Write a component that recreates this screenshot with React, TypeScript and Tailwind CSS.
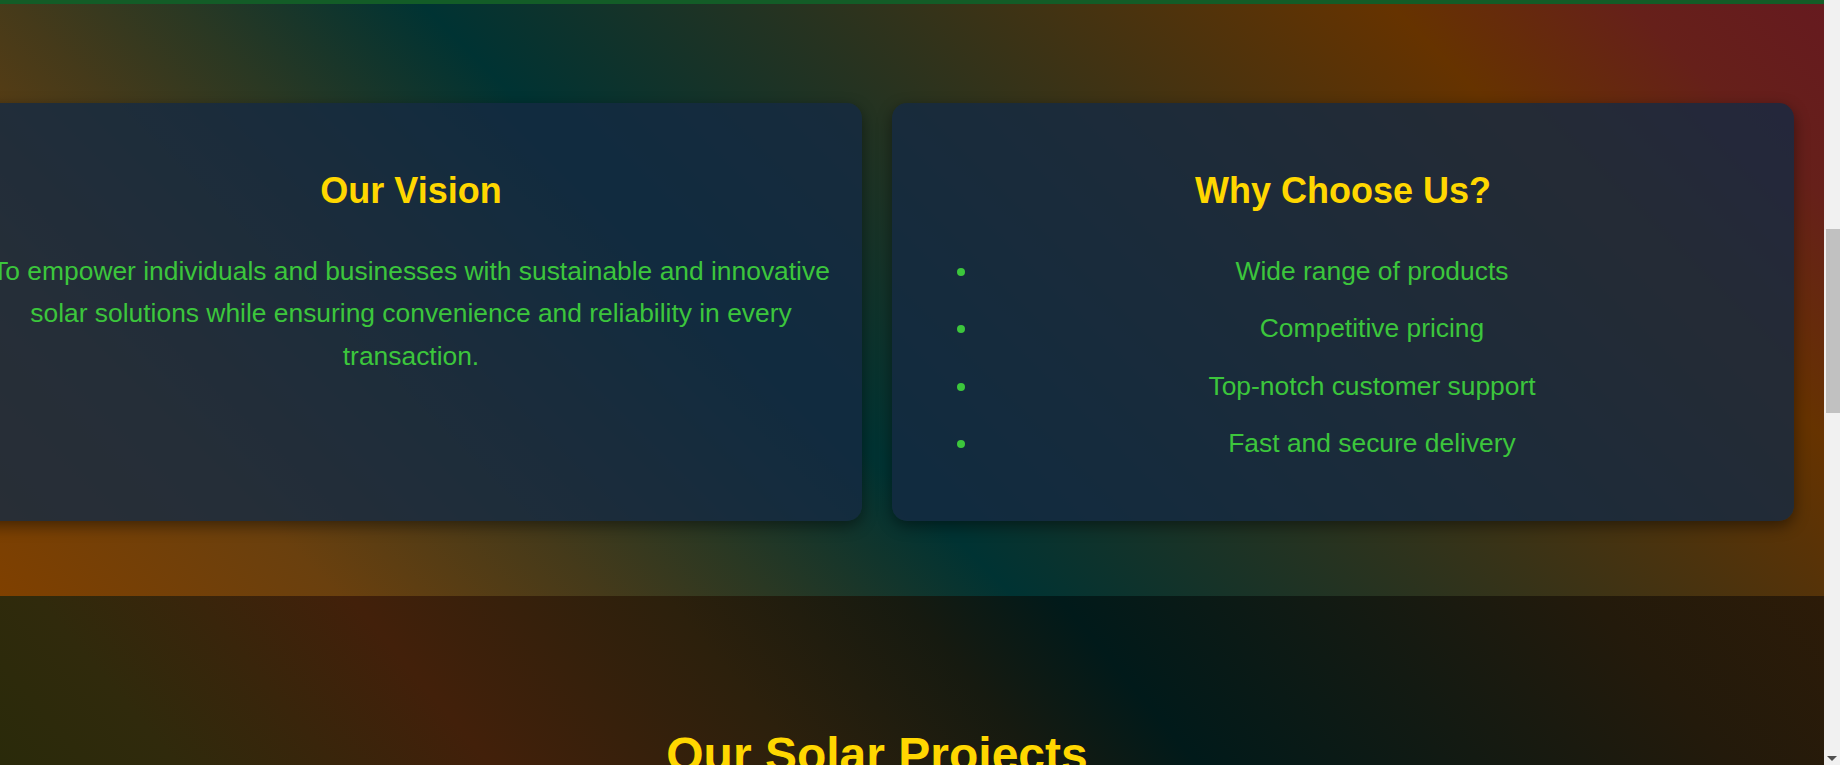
const reasons = [
  "Wide range of products",
  "Competitive pricing",
  "Top-notch customer support",
  "Fast and secure delivery",
];

const Card = ({ children }: { children: React.ReactNode }) => (
  <div className="rounded-[15px] bg-[rgba(21,42,67,0.81)] shadow-[0_5px_15px_rgba(0,0,0,0.45)] px-[30px] pt-[67px] text-center">
    {children}
  </div>
);

export default function App() {
  return (
    <div className="flex h-[765px] w-full overflow-hidden font-['Liberation_Sans',Arial,sans-serif]">
      <div className="flex-1 flex flex-col overflow-hidden">
        <div className="h-[4px] bg-[#135c27] shrink-0" />

        {/* about section */}
        <section className="h-[592px] shrink-0 overflow-hidden bg-[linear-gradient(45deg,#7f4000_0%,#6a400e_14%,#453a1a_25%,#2a3823_32%,#003333_42%,#33331a_62%,#663300_82%,#66201a_92%,#661a1f_100%)]">
          <div className="w-[1894px] ml-[-70px] grid grid-cols-2 gap-[30px] px-[30px] pt-[99px]">
            <div className="h-[418px] grid">
              <Card>
                <h2 className="text-[36px] leading-[41px] font-bold text-[#ffd700] mb-[39px]">Our Vision</h2>
                <p className="text-[26.4px] leading-[42.4px] text-[#3cc63c]">
                  To empower individuals and businesses with sustainable and innovative solar solutions while
                  ensuring convenience and reliability in every transaction.
                </p>
              </Card>
            </div>
            <div className="h-[418px] grid">
              <Card>
                <h2 className="text-[36px] leading-[41px] font-bold text-[#ffd700] mb-[39px]">Why Choose Us?</h2>
                <ul className="list-disc pl-[58px] text-[26.4px] leading-[42.4px] text-[#3cc63c]">
                  {reasons.map((r) => (
                    <li key={r} className="mb-[15px] text-center">
                      {r}
                    </li>
                  ))}
                </ul>
              </Card>
            </div>
          </div>
        </section>

        {/* projects section */}
        <section className="flex-1 overflow-hidden bg-[linear-gradient(50deg,#2a2a0a_0%,#302a0c_9%,#42200a_25%,#2c200c_41%,#161a10_53%,#011a1a_61%,#231a0b_88%,#2c1b08_100%)]">
          <div className="w-[1894px] ml-[-70px] pt-[123px] text-center">
            <h2 className="text-[48px] font-bold text-[#ffd700]">Our Solar Projects</h2>
          </div>
        </section>
      </div>

      {/* scrollbar */}
      <div className="w-[16px] shrink-0 bg-[#f1f1f1] flex flex-col items-end">
        <div className="mt-[229px] h-[184px] w-[14px] bg-[#c1c1c1]" />
        <div className="mt-auto mb-[4px] mr-[3px] w-0 h-0 border-l-[5px] border-r-[5px] border-t-[5px] border-l-transparent border-r-transparent border-t-[#505050]" />
      </div>
    </div>
  );
}
